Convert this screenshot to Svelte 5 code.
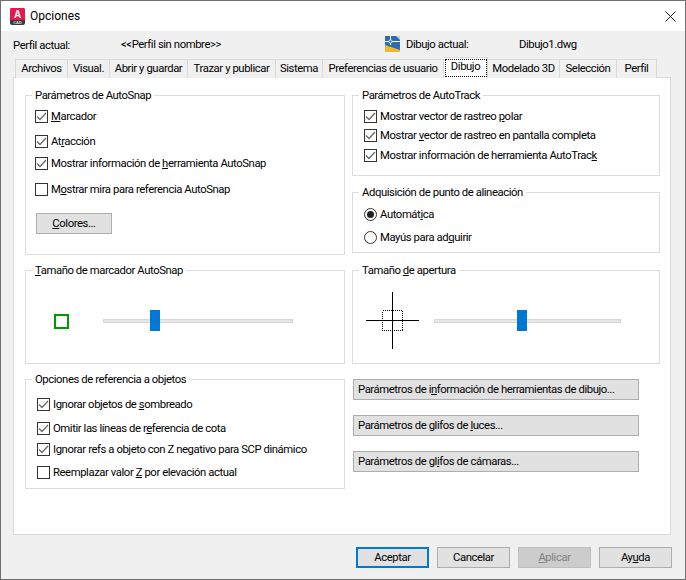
<script>
	var tabs = [
		{ label: 'Archivos', w: 53 },
		{ label: 'Visual.', w: 42 },
		{ label: 'Abrir y guardar', w: 78 },
		{ label: 'Trazar y publicar', w: 88 },
		{ label: 'Sistema', w: 47 },
		{ label: 'Preferencias de usuario', w: 121 },
		{ label: 'Dibujo', w: 44, active: true },
		{ label: 'Modelado 3D', w: 72 },
		{ label: 'Selección', w: 57 },
		{ label: 'Perfil', w: 40 }
	];
</script>

{#snippet check(on)}
	<span class="box">
		{#if on}
			<svg width="11" height="11" viewBox="0 0 11 11"><path d="M1 5.5 L4 8.5 L10 2" fill="none" stroke="#6a6a6a" stroke-width="1.3" /></svg>
		{/if}
	</span>
{/snippet}

<div class="dialog">
	<header class="titlebar">
		<svg class="logo" width="15" height="17" viewBox="0 0 15 17">
			<rect x="0" y="0" width="15" height="17" rx="2" fill="#3a3a40" />
			<path d="M0 2 a2 2 0 0 1 2 -2 H13 a2 2 0 0 1 2 2 V12 H0 Z" fill="#e51a4b" />
			<text x="7.5" y="10" text-anchor="middle" class="logo-a">A</text>
			<text x="7.5" y="15.8" text-anchor="middle" class="logo-cad">CAD</text>
		</svg>
		<span class="title">Opciones</span>
		<svg class="close" width="11" height="11" viewBox="0 0 11 11"><path d="M0.5 0.5 L10.5 10.5 M10.5 0.5 L0.5 10.5" stroke="#222" stroke-width="1" /></svg>
	</header>

	<div class="body">
		<div class="profile">
			<span class="p-label">Perfil actual:</span>
			<span class="p-name">&lt;&lt;Perfil sin nombre&gt;&gt;</span>
			<svg class="dwg" width="15" height="16" viewBox="0 0 15 16">
				<rect x="0" y="0" width="15" height="16" fill="#2a6db5" />
				<path d="M11 0 H15 V4 Z" fill="#b9d3ec" />
				<path d="M0 9 L15 14 V16 H0 Z" fill="#f4b72a" />
				<path d="M0 5.5 H15 M5.5 0 V9" stroke="#fff" stroke-width="1" />
				<circle cx="5.5" cy="5.5" r="1.6" fill="#2a6db5" stroke="#fff" stroke-width="0.8" />
			</svg>
			<span class="d-label">Dibujo actual:</span>
			<span class="d-name">Dibujo1.dwg</span>
		</div>

		<nav class="tabs">
			{#each tabs as t}
				<div class="tab" class:active={t.active} style="width: {t.w}px">
					<span class:focus={t.active}>{t.label}</span>
				</div>
			{/each}
		</nav>

		<main class="panel">
			<div class="col left">
				<fieldset class="snap">
					<legend>Parámetros de AutoSnap</legend>
					<div class="row">{@render check(true)}<span><u>M</u>arcador</span></div>
					<div class="row">{@render check(true)}<span>At<u>r</u>acción</span></div>
					<div class="row">{@render check(true)}<span>Mostrar información de <u>h</u>erramienta AutoSnap</span></div>
					<div class="row">{@render check(false)}<span>M<u>o</u>strar mira para referencia AutoSnap</span></div>
					<button class="btn colores"><u>C</u>olores...</button>
				</fieldset>

				<fieldset class="size">
					<legend><u>T</u>amaño de marcador AutoSnap</legend>
					<div class="size-row marker">
						<span class="green"></span>
						<div class="slider s1"><span class="thumb"></span></div>
					</div>
				</fieldset>

				<fieldset class="objs">
					<legend>Opciones de referencia a objetos</legend>
					<div class="row">{@render check(true)}<span>Ignorar objetos de <u>s</u>ombreado</span></div>
					<div class="row">{@render check(true)}<span>Omitir las líneas de r<u>e</u>ferencia de cota</span></div>
					<div class="row">{@render check(true)}<span>I<u>g</u>norar refs a objeto con Z negativo para SCP dinámico</span></div>
					<div class="row">{@render check(false)}<span>Reemplazar valor <u>Z</u> por elevación actual</span></div>
				</fieldset>
			</div>

			<div class="col right">
				<fieldset class="track">
					<legend>Parámetros de AutoTrack</legend>
					<div class="row">{@render check(true)}<span>Mostrar vector de rastreo <u>p</u>olar</span></div>
					<div class="row">{@render check(true)}<span>Mostrar <u>v</u>ector de rastreo en pantalla completa</span></div>
					<div class="row">{@render check(true)}<span>Mostrar información de herramienta AutoTrac<u>k</u></span></div>
				</fieldset>

				<fieldset class="acq">
					<legend>Adquisición de punto de alineación</legend>
					<div class="row"><span class="radio on"></span><span>Automát<u>i</u>ca</span></div>
					<div class="row"><span class="radio"></span><span>Mayús para ad<u>q</u>uirir</span></div>
				</fieldset>

				<fieldset class="size apert">
					<legend>Tamaño <u>d</u>e apertura</legend>
					<div class="size-row aperture">
						<svg width="54" height="58" viewBox="0 0 54 58" shape-rendering="crispEdges">
							<path d="M0 28.5 H53 M26.5 0 V57" stroke="#000" stroke-width="1" />
							<rect x="16.5" y="18.5" width="20" height="20" fill="none" stroke="#000" stroke-width="1" stroke-dasharray="1 1" />
						</svg>
						<div class="slider s2"><span class="thumb"></span></div>
					</div>
				</fieldset>

				<div class="wide-btns">
					<button class="btn wide">Parámetros de i<u>n</u>formación de herramientas de dibujo...</button>
					<button class="btn wide">Parámetros de glifos de <u>l</u>uces...</button>
					<button class="btn wide">Parámetros de gl<u>i</u>fos de cámaras...</button>
				</div>
			</div>
		</main>

		<footer class="actions">
			<button class="btn act default">Aceptar</button>
			<button class="btn act">Cancelar</button>
			<button class="btn act disabled"><u>A</u>plicar</button>
			<button class="btn act">Ay<u>u</u>da</button>
		</footer>
	</div>
</div>

<style>
	:global(body) {
		margin: 0;
		background: #f0f0f0;
	}

	.dialog {
		box-sizing: border-box;
		width: 686px;
		height: 580px;
		border: 1px solid #6f6f6f;
		display: flex;
		flex-direction: column;
		font-family: Roboto, sans-serif;
		font-size: 11.3px;
		letter-spacing: -0.42px;
		color: #000;
		background: #f0f0f0;
	}

	.titlebar {
		height: 30px;
		background: #fff;
		display: flex;
		align-items: center;
		padding: 0 9px 0 9px;
		flex: none;
	}
	.logo-a { font: bold 10px "Liberation Sans", sans-serif; fill: #fff; letter-spacing: 0; }
	.logo-cad { font: bold 4px "Liberation Sans", sans-serif; fill: #ddd; letter-spacing: 0; }
	.title { margin-left: 5px; font-size: 12px; letter-spacing: 0; flex: 1; }

	.body {
		flex: 1;
		padding: 0 0 0 12px;
		display: flex;
		flex-direction: column;
	}

	.profile {
		height: 26px;
		display: flex;
		align-items: center;
	}
	.p-label { width: 108px; padding-top: 2px; }
	.p-name { width: 264px; }
	.dwg { margin-right: 6px; }
	.d-label { width: 113px; }

	.tabs {
		display: flex;
		height: 18px;
		padding-left: 2px;
		margin-top: 2px;
		position: relative;
		z-index: 1;
	}
	.tab {
		box-sizing: border-box;
		height: 19px;
		padding-bottom: 2px;
		border: 1px solid #d9d9d9;
		border-left: 0;
		border-bottom: 0;
		background: #f0f0f0;
		display: flex;
		align-items: center;
		justify-content: center;
	}
	.tab:first-child { border-left: 1px solid #d9d9d9; }
	.tab.active {
		background: #fff;
		height: 21px;
		margin-top: -2px;
		padding-bottom: 1px;
	}
	.focus {
		outline: 1px dotted #000;
		width: 40px;
		height: 16px;
		box-sizing: border-box;
		text-align: center;
		line-height: 14px;
	}

	.panel {
		box-sizing: border-box;
		width: 658px;
		height: 458px;
		background: #fff;
		border: 1px solid #d9d9d9;
		padding-left: 11px;
		display: flex;
		gap: 7px;
	}
	.col { display: flex; flex-direction: column; padding-top: 8px; }
	.left { width: 320px; }
	.right { width: 308px; }

	fieldset {
		box-sizing: border-box;
		margin: 0;
		padding: 0;
		border: 1px solid #dcdcdc;
		min-width: 0;
	}
	legend {
		margin-left: 6px;
		padding: 2px 3px 0;
		line-height: 16px;
	}

	.row {
		height: 16px;
		display: flex;
		align-items: center;
		gap: 3px;
	}
	.box {
		box-sizing: border-box;
		width: 13px;
		height: 13px;
		border: 1px solid #333;
		background: #fff;
		display: flex;
		flex: none;
	}
	.radio {
		box-sizing: border-box;
		width: 13px;
		height: 13px;
		border: 1px solid #333;
		border-radius: 50%;
		background: #fff;
		flex: none;
		display: flex;
		align-items: center;
		justify-content: center;
	}
	.radio.on::after {
		content: "";
		width: 7px;
		height: 7px;
		border-radius: 50%;
		background: #222;
	}

	.snap { height: 169px; padding-top: 4px; }
	.snap .row { margin-left: 9px; }
	.snap .row:nth-of-type(2) { margin-top: 9px; }
	.snap .row:nth-of-type(3) { margin-top: 6px; }
	.snap .row:nth-of-type(4) { margin-top: 10px; }

	.track { height: 90px; padding-top: 4px; }
	.track .row { margin-left: 11px; }
	.track .row + .row { margin-top: 3.5px; }

	.acq { height: 70px; margin-top: 7px; padding-top: 5px; }
	.acq .row { margin-left: 11px; }
	.acq .row + .row { margin-top: 7px; }

	.size { height: 103px; margin-top: 6px; }
	.apert { margin-top: 8px; }
	.size-row { display: flex; align-items: center; height: 84px; }
	.marker { padding-left: 28px; }
	.aperture { padding-left: 13px; }

	.green {
		box-sizing: border-box;
		width: 15px;
		height: 15px;
		border: 2px solid #009a00;
	}
	.slider {
		box-sizing: border-box;
		height: 4px;
		background: #e6e7e8;
		border: 1px solid #d6d6d6;
		position: relative;
	}
	.s1 { width: 190px; margin-left: 34px; }
	.s2 { width: 187px; margin-left: 14px; }
	.thumb {
		position: absolute;
		top: -10px;
		width: 10px;
		height: 21px;
		background: #0078d7;
	}
	.s1 .thumb { left: 46px; }
	.s2 .thumb { left: 82px; }

	.objs { height: 119px; margin-top: 6px; padding-top: 8px; }
	.objs .row { margin-left: 11px; }
	.objs .row:nth-of-type(2) { margin-top: 8px; }
	.objs .row:nth-of-type(3) { margin-top: 5px; }
	.objs .row:nth-of-type(4) { margin-top: 7px; }

	.btn {
		box-sizing: border-box;
		border: 1px solid #adadad;
		background: #e1e1e1;
		font: inherit;
		letter-spacing: inherit;
		color: #000;
		padding: 0;
	}
	.colores { display: block; width: 76px; height: 21px; margin-top: 16px; margin-left: 10px; }

	.wide-btns {
		display: flex;
		flex-direction: column;
		margin-top: 15px;
		margin-left: 1px;
		gap: 15px;
	}
	.wide {
		width: 286px;
		height: 21px;
		text-align: left;
		padding-left: 4px;
	}

	.actions {
		flex: 1;
		display: flex;
		align-items: flex-start;
		padding: 12px 0 0 343px;
		gap: 8px;
	}
	.act { width: 73px; height: 21px; }
	.default { border: 2px solid #0078d7; }
	.disabled { background: #ccc; color: #838383; border-color: #bfbfbf; }
</style>
